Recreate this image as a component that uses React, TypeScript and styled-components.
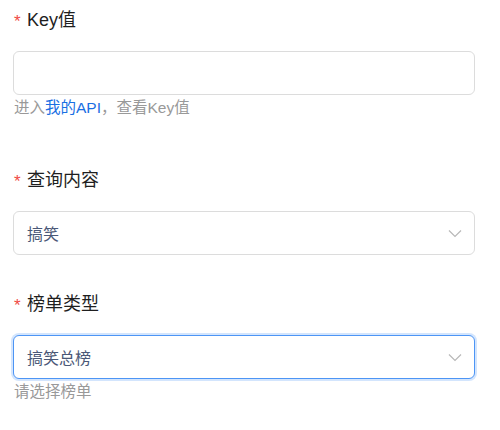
import React from "react";
import styled, { createGlobalStyle } from "styled-components";

const Global = createGlobalStyle`
  html, body { margin: 0; padding: 0; background: #fff; }
  body { font-family: "Liberation Sans", "Noto Sans CJK SC", sans-serif; }
`;

const Form = styled.div`
  display: flex;
  flex-direction: column;
  padding: 8px 25px 0 13px;
  width: 462px;
`;

const Item = styled.div<{ $gap: number }>`
  display: flex;
  flex-direction: column;
  margin-bottom: ${(p) => p.$gap}px;
`;

const Label = styled.div`
  display: flex;
  align-items: center;
  height: 24px;
  font-size: 18px;
  line-height: 24px;
  color: #1f1f1f;
  margin-bottom: 19px;
`;

const Star = styled.span`
  color: #f04a45;
  font-size: 17px;
  width: 13px;
  padding-left: 1px;
  line-height: 24px;
  margin-top: 4px;
`;

const Box = styled.div<{ $focus?: boolean }>`
  box-sizing: border-box;
  height: 44px;
  border-radius: 6px;
  border: 1px solid ${(p) => (p.$focus ? "#4d95f5" : "#dcdcdc")};
  box-shadow: ${(p) => (p.$focus ? "0 0 0 2px #d3e5fd" : "none")};
  background: #fff;
  display: flex;
  align-items: center;
  justify-content: space-between;
  padding: 0 12px 0 13px;
`;

const Value = styled.span`
  font-size: 16px;
  color: #4a5877;
`;

const Help = styled.div`
  font-size: 15.5px;
  line-height: 25px;
  color: #999;
  padding-left: 1px;
`;

const Link = styled.a`
  color: #1a6fe3;
  text-decoration: none;
`;

const Chevron = () => (
  <svg width="14" height="9" viewBox="0 0 14 9" fill="none">
    <path d="M1 1.5 L7 7.5 L13 1.5" stroke="#b8b8b8" strokeWidth="1.2" />
  </svg>
);

export default function App() {
  return (
    <>
      <Global />
      <Form>
        <Item $gap={48}>
          <Label>
            <Star>*</Star>Key值
          </Label>
          <Box />
          <Help>
            进入<Link>我的API</Link>，查看Key值
          </Help>
        </Item>
        <Item $gap={37}>
          <Label>
            <Star>*</Star>查询内容
          </Label>
          <Box>
            <Value>搞笑</Value>
            <Chevron />
          </Box>
        </Item>
        <Item $gap={0}>
          <Label>
            <Star>*</Star>榜单类型
          </Label>
          <Box $focus>
            <Value>搞笑总榜</Value>
            <Chevron />
          </Box>
          <Help>请选择榜单</Help>
        </Item>
      </Form>
    </>
  );
}
